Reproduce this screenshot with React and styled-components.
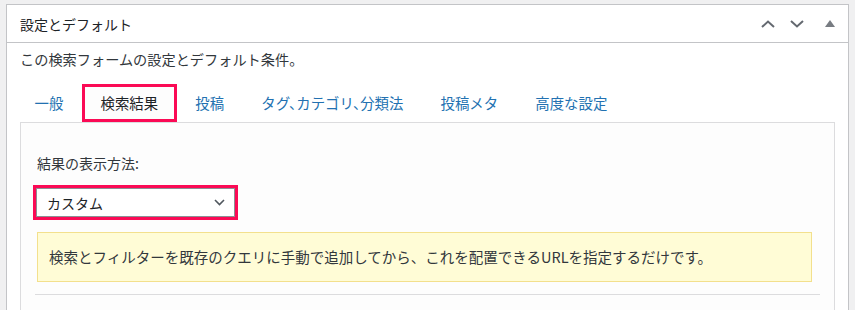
import React from "react";
import styled, { createGlobalStyle } from "styled-components";

const GlobalStyle = createGlobalStyle`
  html, body {
    margin: 0;
    padding: 0;
    background: #f0f0f1;
    font-family: "Noto Sans CJK JP", "Noto Sans", sans-serif;
    font-size: 14px;
    color: #3c434a;
  }
`;

const tabs = ["一般", "検索結果", "投稿", "タグ、カテゴリ、分類法", "投稿メタ", "高度な設定"];

const Chevron = ({ up }) => (
  <svg width="14" height="8" viewBox="0 0 14 8">
    <path
      d={up ? "M1 7 L7 1.5 L13 7" : "M1 1 L7 6.5 L13 1"}
      fill="none"
      stroke="#646970"
      strokeWidth="2"
    />
  </svg>
);

const App = () => {
  return (
    <>
      <GlobalStyle />
      <Page>
        <Panel>
          <Header>
            <Title>設定とデフォルト</Title>
            <HeaderButton $w={28}>
              <Chevron up />
            </HeaderButton>
            <HeaderButton $w={30}>
              <Chevron />
            </HeaderButton>
            <HeaderButton $w={36}>
              <svg width="10" height="7" viewBox="0 0 10 7">
                <path d="M0 7 L5 0 L10 7 Z" fill="#787c82" />
              </svg>
            </HeaderButton>
          </Header>
          <Body>
            <Description>この検索フォームの設定とデフォルト条件。</Description>
            <Tabs>
              {tabs.map((t, i) => (
                <Tab key={t} $active={i === 1}>
                  {t}
                </Tab>
              ))}
            </Tabs>
            <Content>
              <Label>結果の表示方法:</Label>
              <Select>
                <span>カスタム</span>
                <svg width="11" height="7" viewBox="0 0 11 7">
                  <path d="M1 1 L5.5 5.5 L10 1" fill="none" stroke="#50575e" strokeWidth="1.6" />
                </svg>
              </Select>
              <Notice>
                検索とフィルターを既存のクエリに手動で追加してから、これを配置できるURLを指定するだけです。
              </Notice>
              <Rule />
            </Content>
          </Body>
        </Panel>
      </Page>
    </>
  );
};

export default App;

const Page = styled.div`
  padding: 4px 6px 0;
  height: 310px;
  overflow: hidden;
  box-sizing: border-box;
`;

const Panel = styled.div`
  background: #fff;
  border: 1px solid #c3c4c7;
  min-height: 340px;
`;

const Header = styled.div`
  display: flex;
  align-items: center;
  height: 37px;
  border-bottom: 1px solid #c3c4c7;
  padding-left: 13px;
`;

const Title = styled.h2`
  flex: 1;
  margin: 0;
  font-size: 14px;
  font-weight: 400;
  color: #1d2327;
  line-height: 20px;
`;

const HeaderButton = styled.div`
  width: ${(p) => p.$w}px;
  height: 36px;
  display: flex;
  align-items: center;
  justify-content: center;
`;

const Body = styled.div`
  padding: 6px 13px 0;
`;

const Description = styled.p`
  margin: 0;
  font-size: 14.2px;
  line-height: 21px;
  color: #32373c;
`;

const Tabs = styled.div`
  display: flex;
  margin: 14px 0 0 -4px;
`;

const Tab = styled.div`
  padding: 0 15.6px;
  height: 32px;
  line-height: 32px;
  font-size: 14.4px;
  border: 3px solid ${(p) => (p.$active ? "#fb0a55" : "transparent")};
  background: ${(p) => (p.$active ? "#fdfdfd" : "transparent")};
  color: ${(p) => (p.$active ? "#1d2327" : "#2271b1")};
  white-space: nowrap;
  font-feature-settings: "halt";
`;

const Content = styled.div`
  background: #fdfdfd;
  border: 1px solid #dcdcde;
  padding: 30px 14px 40px;
`;

const Label = styled.div`
  margin-left: 2px;
  line-height: 20px;
  color: #32373c;
`;

const Select = styled.div`
  margin: 15px 0 0 1px;
  width: 199px;
  height: 29px;
  box-sizing: border-box;
  border: 1px solid #8c8f94;
  background: #fff;
  outline: 3px solid #fb0a55;
  display: flex;
  align-items: center;
  justify-content: space-between;
  padding: 0 9px 0 10px;
  color: #1d2327;
`;

const Notice = styled.div`
  margin: 15px 8px 0 2px;
  background: #fffcd6;
  border: 1px solid #f3e08d;
  padding: 0 11px;
  height: 48px;
  line-height: 48px;
  font-size: 14.5px;
  color: #32373c;
  white-space: nowrap;
`;

const Rule = styled.div`
  margin-top: 12px;
  border-top: 1px solid #dcdcde;
`;
